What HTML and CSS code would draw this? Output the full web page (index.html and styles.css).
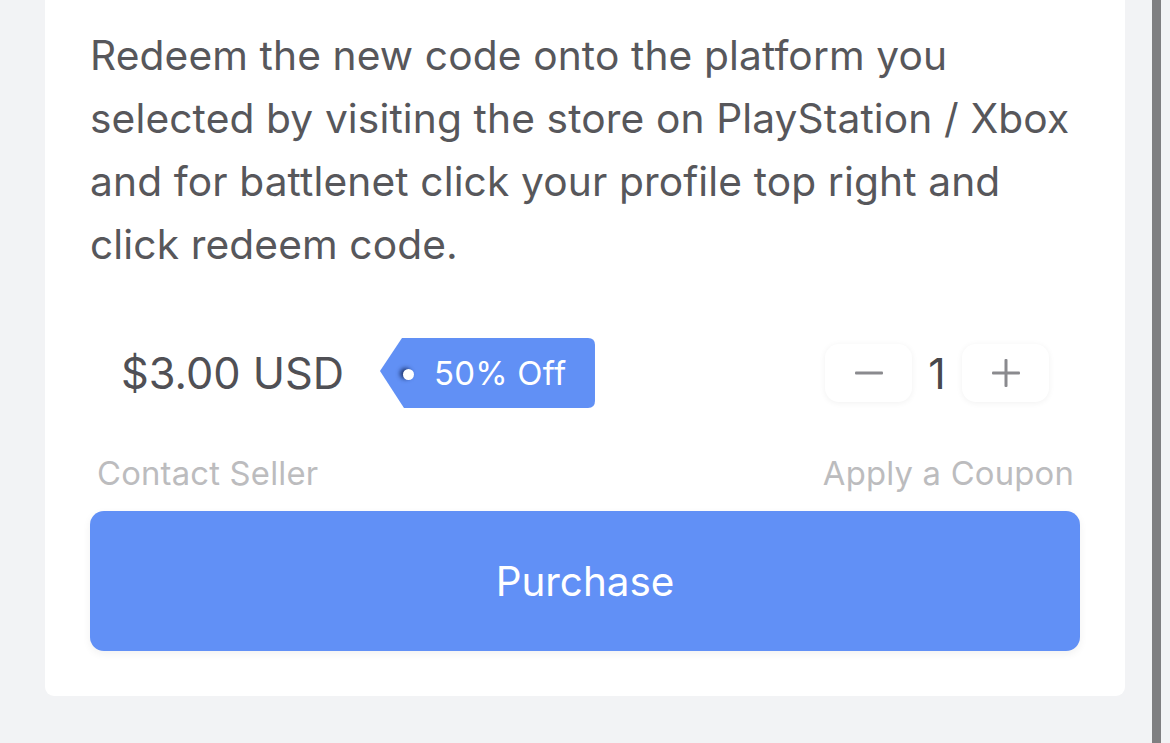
FILE: index.html
```html
<!DOCTYPE html>
<html lang="en">
<head>
<meta charset="utf-8">
<title>Purchase</title>
<link rel="stylesheet" href="styles.css">
</head>
<body>
<div class="page">
  <div class="card">
    <p class="desc">Redeem the new code onto the platform you selected by visiting the store on PlayStation / Xbox and for battlenet click your profile top right and click redeem code.</p>
    <div class="price-row">
      <div class="price-left">
        <span class="price">$3.00 USD</span>
        <span class="tag"><span class="hole"></span><span class="tag-text">50% Off</span></span>
      </div>
      <div class="qty">
        <button class="qty-btn" aria-label="decrease">
          <svg width="28" height="4" viewBox="0 0 28 4"><rect x="0" y="0.5" width="28" height="3" rx="1" fill="#8a8a8e"/></svg>
        </button>
        <span class="qty-num">1</span>
        <button class="qty-btn" aria-label="increase">
          <svg width="28" height="28" viewBox="0 0 28 28"><rect x="0" y="12.5" width="28" height="3" rx="1" fill="#8a8a8e"/><rect x="12.5" y="0" width="3" height="28" rx="1" fill="#8a8a8e"/></svg>
        </button>
      </div>
    </div>
    <div class="links">
      <span class="link">Contact Seller</span>
      <span class="link">Apply a Coupon</span>
    </div>
    <button class="purchase">Purchase</button>
  </div>
</div>
<div class="scrollbar"></div>
</body>
</html>
```
FILE: styles.css
```css
html, body {
  margin: 0;
  padding: 0;
}
body {
  width: 1170px;
  height: 743px;
  overflow: hidden;
  background: #f2f3f5;
  font-family: Inter, "Noto Sans", "Liberation Sans", sans-serif;
}
.page {
  height: 743px;
  display: flex;
  flex-direction: column;
  padding: 0 45px 47px 45px;
  box-sizing: border-box;
}
.card {
  flex: 1;
  background: #ffffff;
  border-radius: 0 0 9px 9px;
  padding: 0 45px 45px 45px;
  display: flex;
  flex-direction: column;
  justify-content: flex-end;
}
.desc {
  margin: 0;
  font-size: 40.7px;
  line-height: 63px;
  letter-spacing: 0.12px;
  color: #57575b;
}
.price-row {
  margin-top: 62px;
  display: flex;
  align-items: center;
  justify-content: space-between;
  height: 70px;
}
.price-left {
  display: flex;
  align-items: center;
}
.price {
  margin-left: 31px;
  font-size: 43.3px;
  color: #505055;
}
.tag {
  margin-left: 36px;
  height: 70px;
  width: 215px;
  background: #6190f5;
  clip-path: path('M22 0 H208 Q215 0 215 7 V63 Q215 70 208 70 H24 L0 33 Z');
  display: flex;
  align-items: center;
  box-sizing: border-box;
  padding-left: 23px;
}
.hole {
  width: 11px;
  height: 11px;
  border-radius: 50%;
  background: #ffffff;
  box-shadow: -3px -1px 4px rgba(20, 40, 90, 0.85);
  margin-top: 2px;
}
.tag-text {
  margin-left: 20px;
  color: #ffffff;
  font-size: 33px;
  letter-spacing: 0.2px;
}
.qty {
  display: flex;
  align-items: center;
  margin-right: 31px;
}
.qty-btn {
  width: 87px;
  height: 58px;
  border: none;
  background: #ffffff;
  border-radius: 14px;
  box-shadow: 0 1px 6px rgba(0, 0, 0, 0.06);
  display: flex;
  align-items: center;
  justify-content: center;
  padding: 0;
}
.qty-num {
  width: 50px;
  text-align: center;
  font-size: 43px;
  color: #48484c;
}
.links {
  display: flex;
  justify-content: space-between;
  margin-top: 45px;
  padding: 0 6px 0 7px;
}
.link {
  font-size: 32.8px;
  line-height: 40px;
  color: #bcbcbe;
  letter-spacing: 0.2px;
}
.purchase {
  margin-top: 18px;
  height: 140px;
  border: none;
  border-radius: 14px;
  background: #6190f6;
  color: #ffffff;
  font-family: inherit;
  font-size: 40.4px;
  box-shadow: 0 3px 8px rgba(0, 0, 0, 0.06);
  padding: 0;
}
.scrollbar {
  position: fixed;
  top: 0;
  right: 9px;
  width: 9px;
  height: 743px;
  background: #7f7f81;
}
```
